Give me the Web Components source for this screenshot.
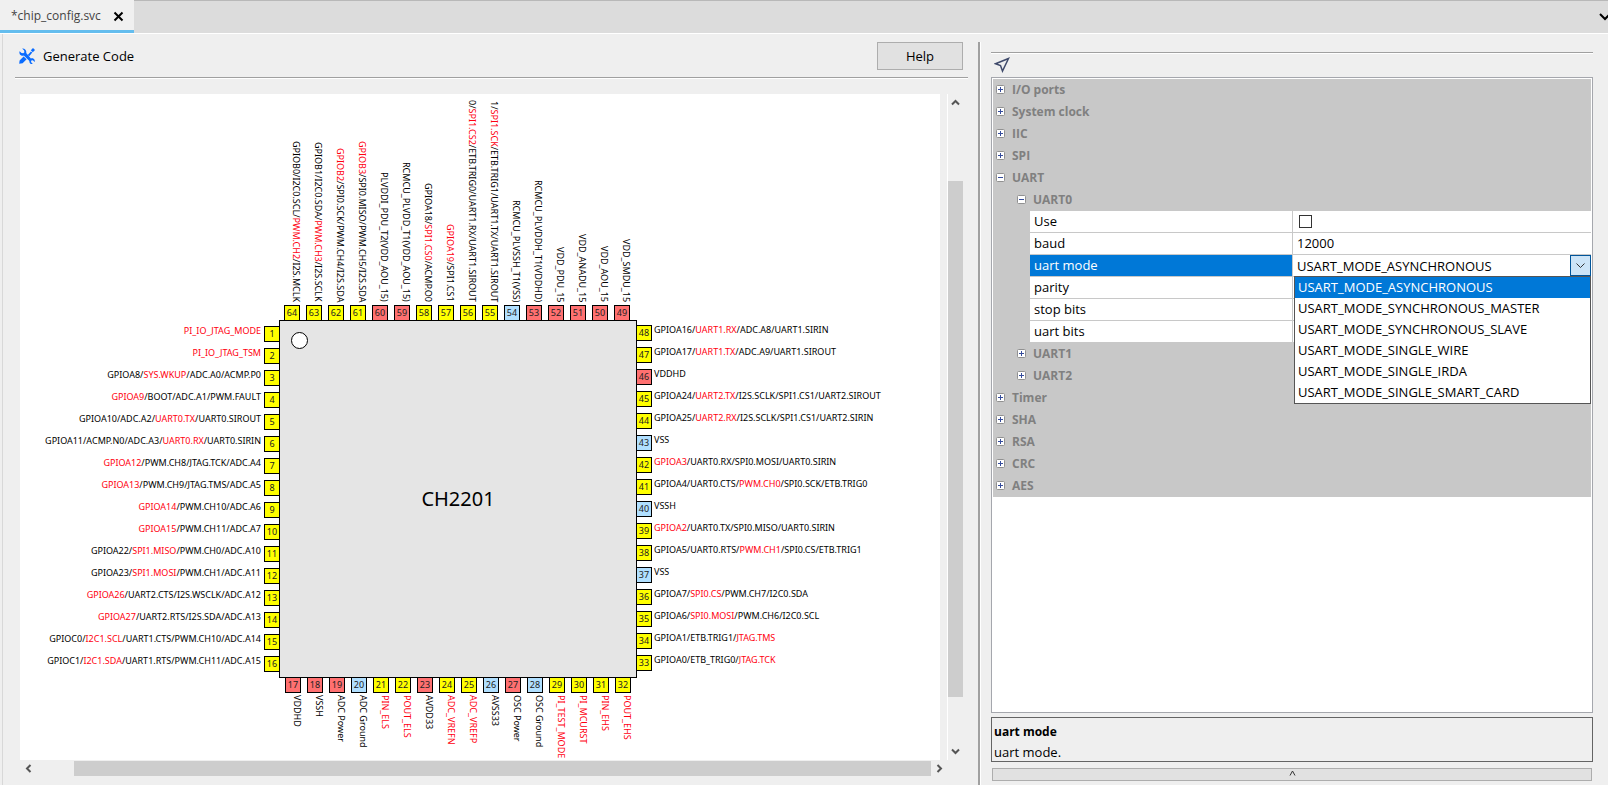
<!DOCTYPE html>
<html lang="en">
<head>
<meta charset="utf-8">
<title>chip_config.svc</title>
<style>
  html, body { margin: 0; height: 100%; }
  body { font: 13px/20px "Open Sans", "Noto Sans", sans-serif; color: #000; background: #efefef; }
</style>
</head>
<body>
<app-window>
  <tab-bar slot="tabs"><editor-tab>*chip_config.svc</editor-tab></tab-bar>
  <editor-panel slot="editor">
    <tool-link slot="tools">Generate Code</tool-link>
    <push-button slot="tools">Help</push-button>
    <chip-view name="CH2201"></chip-view>
  </editor-panel>
  <property-panel slot="properties">
    <tree-group name="I/O ports"></tree-group>
    <tree-group name="System clock"></tree-group>
    <tree-group name="IIC"></tree-group>
    <tree-group name="SPI"></tree-group>
    <tree-group name="UART" open>
      <tree-group name="UART0" level="2" open>
        <property-row name="Use" type="check"></property-row>
        <property-row name="baud" type="text" value="12000"></property-row>
        <property-row name="uart mode" type="select" selected></property-row>
        <property-row name="parity" type="text" value=""></property-row>
        <property-row name="stop bits" type="text" value=""></property-row>
        <property-row name="uart bits" type="text" value=""></property-row>
      </tree-group>
      <tree-group name="UART1" level="2"></tree-group>
      <tree-group name="UART2" level="2"></tree-group>
    </tree-group>
    <tree-group name="Timer"></tree-group>
    <tree-group name="SHA"></tree-group>
    <tree-group name="RSA"></tree-group>
    <tree-group name="CRC"></tree-group>
    <tree-group name="AES"></tree-group>
    <detail-box slot="detail" name="uart mode">uart mode.</detail-box>
  </property-panel>
</app-window>

<script>
const define = (tag, render) => customElements.define(tag, class extends HTMLElement {
  constructor() {
    super();
    this.attachShadow({ mode: 'open' });
  }
  connectedCallback() {
    this.shadowRoot.innerHTML = '<style>*{box-sizing:border-box}button{font:inherit;color:inherit;padding:0;margin:0;border:0;background:none}</style>' + render(this);
  }
});

define('app-window', () => `
  <style>
    :host { display: flex; flex-direction: column; height: 100vh; overflow: hidden; background: #efefef; }
    main { flex: 1; min-height: 0; display: grid; grid-template-columns: 978fr 3px 627fr; grid-template-rows: minmax(0, 1fr);
      border-top: 1px solid #fff; }
    .split { margin-top: 8px; background: #a0a0a0; border-right: 1px solid #fff; }
    slot::slotted(*) { min-width: 0; }
  </style>
  <slot name="tabs"></slot>
  <main><slot name="editor"></slot><div class="split"></div><slot name="properties"></slot></main>`);

define('tab-bar', () => `
  <style>
    :host { display: flex; height: 33px; background: #dcdcdc; justify-content: space-between; box-shadow: inset 0 1px #b8b8b8; flex: none; }
    button { width: 9px; height: 32px; display: flex; align-items: center; overflow: hidden; }
  </style>
  <slot></slot>
  <button aria-label="Show tab list"><svg width="12" height="9" style="flex:none"><path d="M1 2l5 5 5-5" fill="none" stroke="#000" stroke-width="2"/></svg></button>`);

define('editor-tab', () => `
  <style>
    :host { display: flex; align-items: center; gap: 12px; width: 134px; box-sizing: border-box; padding: 2px 0 0 11px; background: #f0f0f0;
      border-bottom: 3px solid #64bdee; font-size: 12px; color: #444; }
    button { display: flex; }
  </style>
  <slot></slot>
  <button aria-label="Close"><svg width="11" height="11"><path d="M1.500 1.500l8 8M9.500 1.500l-8 8" stroke="#000" stroke-width="2"/></svg></button>`);

define('tool-link', () => `
  <style>
    :host { display: block; margin-right: auto; }
    button { display: flex; align-items: center; gap: 8px; }
  </style>
  <button>
    <svg width="16" height="16" viewBox="0 0 16 16" fill="#0a6cff">
      <path d="M3.200 .6l1.900 2 .3 1.700-1.100 1-1.800-.3L.600 3.200C.100 4.800.6 6.500 1.900 7.300c1 .6 2 .6 2.900.3l5.600 5.500c-.2 1 .3 2 1.100 2.600.7.400 1.600.4 2.300.2l-1.800-1.800.3-1.500 1.500-.4 1.900 1.800c.3-1.300 0-2.600-1.100-3.300-.8-.5-1.800-.6-2.700-.3L7.200 5.100C7.500 3.700 7.200 2.400 6.200 1.400 5.400.700 4.200.4 3.200.600z"/>
      <path d="M.2 15.800l.4-3.400 4-4 3 2.900-4 3.900zM8.800 7l3.100-3.600 1.400 1.100L10.200 8.200zM11.800 2.200L14 0l2 2-2.200 2.200z"/>
    </svg>
    <slot></slot>
  </button>`);

define('push-button', () => `
  <style>
    :host { display: block; }
    button { display: block; width: 86px; height: 28px; background: #e1e1e1; border: 1px solid #adadad; }
  </style>
  <button><slot></slot></button>`);

define('scroll-bar', el => {
  const h = el.hasAttribute('horizontal');
  const arrow = d => `<svg width="11" height="11"><path d="${d}" fill="none" stroke="#555" stroke-width="2"/></svg>`;
  const [before, size, after] = el.getAttribute('range').split(' ');
  return `
  <style>
    :host { display: flex; flex-direction: ${h ? 'row' : 'column'}; min-width: 0; min-height: 0; }
    button { flex: 0 0 17px; display: flex; align-items: center; justify-content: center; }
    .thumb { background: #cdcdcd; }
  </style>
  <button aria-label="Back">${arrow(h ? 'M7.500 2L4 5.500 7.500 9' : 'M2 7.500L5.500 4 9 7.500')}</button>
  <div style="flex:${before}"></div><div class="thumb" style="flex:${size}"></div><div style="flex:${after}"></div>
  <button aria-label="Forward">${arrow(h ? 'M3.500 2L7 5.500 3.500 9' : 'M2 3.500L5.500 7 9 3.500')}</button>`;
});

define('editor-panel', () => `
  <style>
    :host { display: flex; flex-direction: column; min-height: 0; padding: 0 10px 9px 12px; border-left: 1px solid #d8d8d8; margin-left: 2px; }
    header { flex: none; display: flex; align-items: center; height: 44px; padding: 0 5px 0 4px; border-bottom: 1px solid #a0a0a0; box-shadow: 0 1px #fff; }
    .area { flex: 1; min-height: 0; display: grid; grid-template: minmax(0, 1fr) 15px / minmax(0, 1fr) 8px 15px; row-gap: 1px; margin: 16px 5px 0; }
    .v { grid-area: 1 / 3; border-left: 1px solid #fff; margin-left: -1px; }
    .h { grid-area: 2 / 1 / 3 / 3; }
  </style>
  <header><slot name="tools"></slot></header>
  <div class="area">
    <slot></slot>
    <scroll-bar class="v" range="70 516 46"></scroll-bar>
    <scroll-bar class="h" horizontal range="37 857 0"></scroll-bar>
  </div>`);

define('chip-pin', el => {
  const side = el.getAttribute('side');
  const dir = { left: 'row-reverse', right: 'row', top: 'column-reverse', bottom: 'column' }[side];
  const vertical = side === 'top' || side === 'bottom';
  const fill = { io: '#ffff00', power: '#ff7070', ground: '#b0dfff' }[el.getAttribute('kind')];
  const gap = side === 'left' || side === 'top' ? 3 : 2;
  return `
  <style>
    :host { display: flex; flex: none; flex-direction: ${dir}; gap: ${gap}px; align-items: ${vertical ? 'flex-end' : 'flex-start'};
      ${vertical ? 'width' : 'height'}: 16px; font: 9px/10px "Noto Sans", sans-serif; white-space: nowrap; }
    .pad { flex: none; width: 16px; height: 16px; border: 1px solid #000; background: ${fill}; color: #222;
      display: flex; align-items: center; justify-content: center; line-height: 14px; }
    .label { flex: none; ${vertical ? 'writing-mode: vertical-rl; line-height: 8px;' : ''} }
    ::slotted(em) { font-style: normal; color: #ff0010; }
  </style>
  <span class="pad">${el.getAttribute('n')}</span><span class="label"><slot></slot></span>`;
});

/* Pin tables: number, kind (y = I/O, r = power, b = ground), functions. The selected function is between asterisks. */
const LEFT = `1 y *PI_IO_JTAG_MODE*
2 y *PI_IO_JTAG_TSM*
3 y GPIOA8/*SYS.WKUP*/ADC.A0/ACMP.P0
4 y *GPIOA9*/BOOT/ADC.A1/PWM.FAULT
5 y GPIOA10/ADC.A2/*UART0.TX*/UART0.SIROUT
6 y GPIOA11/ACMP.N0/ADC.A3/*UART0.RX*/UART0.SIRIN
7 y *GPIOA12*/PWM.CH8/JTAG.TCK/ADC.A4
8 y *GPIOA13*/PWM.CH9/JTAG.TMS/ADC.A5
9 y *GPIOA14*/PWM.CH10/ADC.A6
10 y *GPIOA15*/PWM.CH11/ADC.A7
11 y GPIOA22/*SPI1.MISO*/PWM.CH0/ADC.A10
12 y GPIOA23/*SPI1.MOSI*/PWM.CH1/ADC.A11
13 y *GPIOA26*/UART2.CTS/I2S.WSCLK/ADC.A12
14 y *GPIOA27*/UART2.RTS/I2S.SDA/ADC.A13
15 y GPIOC0/*I2C1.SCL*/UART1.CTS/PWM.CH10/ADC.A14
16 y GPIOC1/*I2C1.SDA*/UART1.RTS/PWM.CH11/ADC.A15`;
const BOTTOM = `17 r VDDHD
18 r VSSH
19 r ADC Power
20 b ADC Ground
21 y *PIN_ELS*
22 y *POUT_ELS*
23 r AVDD33
24 y *ADC_VREFN*
25 y *ADC_VREFP*
26 b AVSS33
27 r OSC Power
28 b OSC Ground
29 y *PI_TEST_MODE*
30 y *PI_MCURST*
31 y *PIN_EHS*
32 y *POUT_EHS*`;
const RIGHT = `48 y GPIOA16/*UART1.RX*/ADC.A8/UART1.SIRIN
47 y GPIOA17/*UART1.TX*/ADC.A9/UART1.SIROUT
46 r VDDHD
45 y GPIOA24/*UART2.TX*/I2S.SCLK/SPI1.CS1/UART2.SIROUT
44 y GPIOA25/*UART2.RX*/I2S.SCLK/SPI1.CS1/UART2.SIRIN
43 b VSS
42 y *GPIOA3*/UART0.RX/SPI0.MOSI/UART0.SIRIN
41 y GPIOA4/UART0.CTS/*PWM.CH0*/SPI0.SCK/ETB.TRIG0
40 b VSSH
39 y *GPIOA2*/UART0.TX/SPI0.MISO/UART0.SIRIN
38 y GPIOA5/UART0.RTS/*PWM.CH1*/SPI0.CS/ETB.TRIG1
37 b VSS
36 y GPIOA7/*SPI0.CS*/PWM.CH7/I2C0.SDA
35 y GPIOA6/*SPI0.MOSI*/PWM.CH6/I2C0.SCL
34 y GPIOA1/ETB.TRIG1/*JTAG.TMS*
33 y GPIOA0/ETB_TRIG0/*JTAG.TCK*`;
const TOP = `64 y GPIOB0/I2C0.SCL/*PWM.CH2*/I2S.MCLK
63 y GPIOB1/I2C0.SDA/*PWM.CH3*/I2S.SCLK
62 y *GPIOB2*/SPI0.SCK/PWM.CH4/I2S.SDA
61 y *GPIOB3*/SPI0.MISO/PWM.CH5/I2S.SDA
60 r PLVDDI_PDU_T2(VDD_AOU_15)
59 r RCMCU_PLVDD_T1(VDD_AOU_15)
58 y GPIOA18/*SPI1.CS0*/ACMP.O0
57 y *GPIOA19*/SPI1.CS1
56 y 0/*SPI1.CS2*/ETB.TRIG0/UART1.RX/UART1.SIROUT
55 y 1/*SPI1.SCK*/ETB.TRIG1/UART1.TX/UART1.SIROUT
54 b RCMCU_PLVSSH_T1(VSS)
53 r RCMCU_PLVDDH_T1(VDDHD)
52 r VDD_PDU_15
51 r VDD_ANADU_15
50 r VDD_AOU_15
49 r VDD_SMDU_15`;
const KIND = { y: 'io', r: 'power', b: 'ground' };
const pins = (table, side) => table.split('\n').map(line => {
  const [, n, k, text] = line.match(/^(\d+) (\w) (.*)$/);
  return `<chip-pin n="${n}" side="${side}" kind="${KIND[k]}">${text.replace(/\*([^*]+)\*/g, '<em>$1</em>')}</chip-pin>`;
}).join('');

define('chip-view', el => `
  <style>
    :host { display: grid; grid-template: 227px 356px 1fr / 260px 356px 1fr; background: #fff; overflow: hidden; min-width: 0; min-height: 0; }
    .pins { display: flex; gap: 6px; min-width: 0; min-height: 0; position: relative; }
    .top { grid-area: 1 / 2; align-items: flex-end; padding-left: 4px; }
    .left { grid-area: 2 / 1; flex-direction: column; padding-top: 5px; }
    .right { grid-area: 2 / 3; flex-direction: column; padding-top: 4px; }
    .bottom { grid-area: 3 / 2; align-items: flex-start; padding-left: 5px; }
    .body { grid-area: 2 / 2; margin: -1px; border: 1px solid #000; background: #e5e5e5; display: grid; place-items: center;
      font: 20px/28px "Noto Sans", sans-serif; }
    .body > * { grid-area: 1 / 1; }
    .dot { place-self: start; margin: 11px; width: 17px; height: 17px; border: 1px solid #000; border-radius: 50%; background: #fff; }
  </style>
  <div class="body"><i class="dot"></i><span>${el.getAttribute('name')}</span></div>
  <div class="pins top">${pins(TOP, 'top')}</div>
  <div class="pins left">${pins(LEFT, 'left')}</div>
  <div class="pins right">${pins(RIGHT, 'right')}</div>
  <div class="pins bottom">${pins(BOTTOM, 'bottom')}</div>`);

define('property-panel', () => `
  <style>
    :host { display: flex; flex-direction: column; min-height: 0; padding: 18px 15px 4px 10px; }
    header { flex: none; height: 25px; border-top: 1px solid #a0a0a0; box-shadow: inset 0 1px #fff; padding: 4px 3px; }
    header button { display: block; }
    .tree { flex: 1; min-height: 0; border: 1px solid #a5a7ad; padding: 1px; background: #fff; }
    .more { flex: none; margin: 6px 1px 0; height: 13px; background: #e1e1e1; border: 1px solid #adadad; display: flex; justify-content: center; align-items: flex-start; padding-top: 1px; }
  </style>
  <header><button aria-label="Locate"><svg width="16" height="16"><path d="M14.500 1.500L1.500 6.800l5 1.800 2 5.500z" fill="none" stroke="#3f4a6b" stroke-width="1.500"/></svg></button></header>
  <div class="tree"><slot></slot></div>
  <slot name="detail"></slot>
  <button class="more" aria-label="Expand"><svg width="7" height="7"><path d="M1 5.500L3.500 1 6 5.500" fill="none" stroke="#333"/></svg></button>`);

define('tree-group', el => `
  <style>
    :host { display: block; background: #c8c8c8; }
    button { display: flex; align-items: center; gap: 7px; width: 100%; height: 22px; padding-left: ${el.getAttribute('level') ? 24 : 3}px;
      font-weight: 700; font-size: 12px; line-height: 20px; color: #808080; padding-bottom: 1px; }
    svg { flex: none; }
  </style>
  <button aria-expanded="${el.hasAttribute('open')}">
    <svg width="9" height="9"><rect x=".5" y=".5" width="8" height="8" rx="1" fill="#fff" stroke="#919191"/><path d="M2 4.500h5${el.hasAttribute('open') ? '' : 'M4.500 2v5'}" stroke="#354c9c"/></svg>
    <span>${el.getAttribute('name')}</span>
  </button>
  <slot></slot>`);

const MODES = ['ASYNCHRONOUS', 'SYNCHRONOUS_MASTER', 'SYNCHRONOUS_SLAVE', 'SINGLE_WIRE', 'SINGLE_IRDA', 'SINGLE_SMART_CARD'].map(m => 'USART_MODE_' + m);

define('property-row', el => {
  const type = el.getAttribute('type');
  const control = {
    check: () => '<input id="v" type="checkbox">',
    text: () => `<input id="v" type="text" value="${el.getAttribute('value')}">`,
    select: () => `<select id="v">${MODES.map(m => `<option>${m}</option>`).join('')}</select>
      <span class="arrow"><svg width="9" height="6"><path d="M.5.500l4 4 4-4" fill="none" stroke="#333"/></svg></span>
      <drop-list></drop-list>`
  }[type]();
  return `
  <style>
    :host { display: grid; grid-template-columns: 262fr 298fr; column-gap: 1px; height: 22px; box-sizing: border-box; margin-left: 37px; border-bottom: 1px solid #c8c8c8; }
    label { padding-left: 4px; line-height: 20px; background: #fff; }
    :host([selected]) label { background: #0078d7; color: #fff; }
    .value { position: relative; display: flex; align-items: center; background: #fff; min-width: 0; }
    input[type=text], select { flex: 1; min-width: 0; height: 20px; margin: 0; padding: 0 0 1px 4px; border: 0; outline: 0; background: none; font: inherit; line-height: 20px; color: inherit; appearance: none; }
    input[type=checkbox] { appearance: none; width: 13px; height: 13px; margin: 0 0 0 6px; border: 1px solid #333; background: #fff; }
    .arrow { flex: none; width: 21px; height: 21px; border: 1px solid #005499; background: #cce4f7; display: flex; align-items: center; justify-content: center; pointer-events: none; }
    drop-list { position: absolute; top: 100%; left: 1px; right: 0; z-index: 2; }
  </style>
  <label for="v">${el.getAttribute('name')}</label><div class="value">${control}</div>`;
});

define('drop-list', () => `
  <style>
    :host { display: block; box-sizing: border-box; border: 1px solid #555; background: #fff; }
    ul { list-style: none; margin: 0; padding: 0; }
    li { padding-left: 3px; line-height: 21px; }
    li[aria-selected=true] { background: #0078d7; color: #fff; }
  </style>
  <ul role="listbox" aria-label="uart mode">${MODES.map((m, i) => `<li role="option" aria-selected="${i === 0}">${m}</li>`).join('')}</ul>`);

define('detail-box', el => `
  <style>
    :host { display: block; flex: none; box-sizing: border-box; margin-top: 4px; padding: 4px 2px 0; height: 45px; border: 1px solid #646464; }
    h2 { margin: 0; font-size: 12px; line-height: 20px; }
  </style>
  <h2>${el.getAttribute('name')}</h2><slot></slot>`);
</script>
</body>
</html>
